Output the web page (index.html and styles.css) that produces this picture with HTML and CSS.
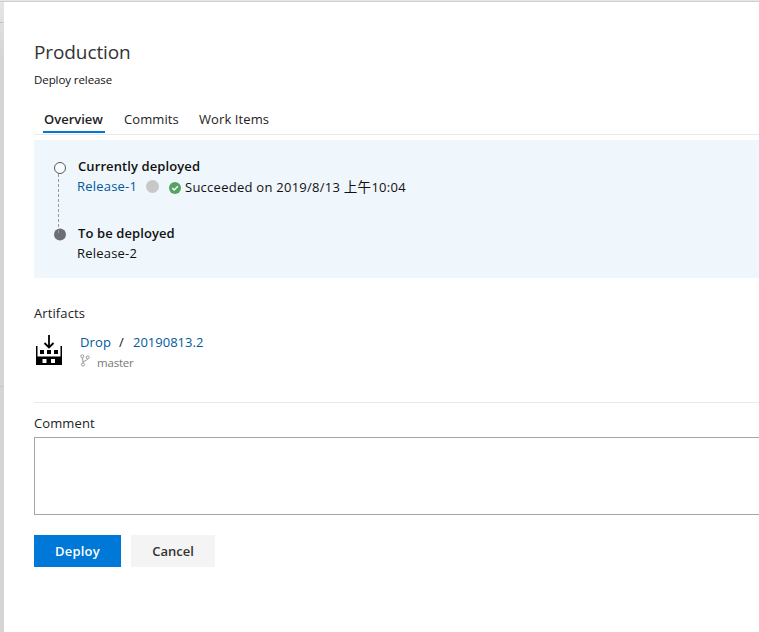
FILE: index.html
```html
<!DOCTYPE html>
<html lang="en">
<head>
<meta charset="utf-8">
<title>Deploy release</title>
<link rel="stylesheet" href="styles.css">
</head>
<body>
<div class="backdrop">
  <main class="panel">
    <h1 class="title">Production</h1>
    <p class="subtitle">Deploy release</p>
    <nav class="tabs">
      <a class="tab active">Overview</a>
      <a class="tab commits">Commits</a>
      <a class="tab work">Work Items</a>
    </nav>
    <section class="summary">
      <svg class="timeline" width="14" height="90" viewBox="0 0 14 90">
        <circle cx="7" cy="12" r="5.5" fill="#fff" fill-opacity=".6" stroke="#55585b"/>
        <path d="M5.5 18v55" stroke="#999" stroke-dasharray="3 2"/>
        <circle cx="7" cy="78.5" r="6" fill="#6b6f73"/>
        <path d="M5.5 74v3" stroke="#999"/>
      </svg>
      <div class="deployments">
        <strong class="heading current">Currently deployed</strong>
        <div class="status">
          <a class="link release">Release-1</a>
          <span class="dot"></span>
          <svg class="check" width="12" height="12" viewBox="0 0 12 12"><circle cx="6" cy="6" r="6" fill="#55a362"/><path d="M3.3 6.1l1.9 1.9 3.6-3.7" fill="none" stroke="#fff" stroke-width="1.4"/></svg>
          <span class="result">Succeeded on 2019/8/13 <span class="cjk">上午</span>10:04</span>
        </div>
        <strong class="heading next">To be deployed</strong>
        <span class="release second">Release-2</span>
      </div>
    </section>
    <h2 class="label artifacts">Artifacts</h2>
    <div class="artifact">
      <svg class="build" width="26" height="31" viewBox="0 0 26 31">
        <path d="M13 0v12M8.5 8l4.5 4.5L17.500 8" fill="none" stroke="#000" stroke-width="1.8"/>
        <path fill="#000" fill-rule="evenodd" d="M0 11h1.500v10.500h23V11H26v19H0zM6.500 24v4h4v-4zm8.500 0v4h4v-4z"/>
        <path fill="#000" d="M4 15h4v4H4zm7 0h4v4h-4zm7 0h4v4h-4z"/>
      </svg>
      <div class="source">
        <div class="path"><a class="link drop">Drop</a><span class="slash">/</span><a class="link number">20190813.2</a></div>
        <div class="branch">
          <svg width="10" height="13" viewBox="0 0 10 13" fill="none" stroke="#999"><circle cx="2.3" cy="2.3" r="1.5"/><circle cx="7.7" cy="3.3" r="1.5"/><circle cx="3" cy="10.5" r="1.5"/><path d="M2.5 4L3 9M7.5 5Q7 7 3 7.5"/></svg>
          <span>master</span>
        </div>
      </div>
    </div>
    <label class="label comment" for="comment">Comment</label>
    <textarea id="comment" class="input"></textarea>
    <div class="actions"><button class="button primary">Deploy</button><button class="button">Cancel</button></div>
  </main>
</div>
</body>
</html>
```

FILE: styles.css
```css
* { box-sizing: border-box; }
body { margin: 0; overflow: hidden; font: 13px/20px "Open Sans", "Noto Sans CJK TC", sans-serif; color: #111; }
.backdrop { height: 632px; padding: 2px 0 0 4px; background: linear-gradient(#cfcfcf, #cfcfcf) 0 1px / 100% 1px no-repeat, linear-gradient(#bebebe, #bebebe) 0 22px / 3px 1px no-repeat, linear-gradient(#c5c5c5, #c5c5c5) 0 386px / 3px 1px no-repeat, linear-gradient(#e6e6e6, #d4d4d4 60px); }
.panel { height: 630px; padding: 36px 0 0 30px; background: #fff; }
.title { margin: 0; font-size: 19px; line-height: 28px; font-weight: 400; color: #333; letter-spacing: -.1px; }
.subtitle { margin: 4px 0 0; font-size: 11.5px; line-height: 20px; letter-spacing: -.08px; }
.tabs { display: flex; height: 31px; margin-top: 14px; padding-left: 9px; border-bottom: 1px solid #eaeaea; line-height: 22px; }
.tab { height: 29px; padding-top: 4px; }
.active { width: 62px; padding-left: 1px; border-bottom: 2px solid #0078d4; font-weight: 600; }
.commits { width: 75px; padding-left: 19px; letter-spacing: .1px; }
.work { padding-left: 19px; letter-spacing: .1px; }
.tab, .label { color: #222; }
.summary { display: flex; height: 138px; margin-top: 5px; padding: 16px 0 0 19px; background: #eff6fc; }
.deployments { margin-left: 10px; display: flex; flex-direction: column; }
.heading { margin-left: 1px; font-weight: 600; letter-spacing: .1px; }
.status { display: flex; height: 20px; }
.release { width: 69px; letter-spacing: .2px; }
.dot { width: 13px; height: 13px; margin-top: 4px; border-radius: 50%; background: #c8c8c8; }
.check { margin: 6px 4px 0 10px; }
.result { height: 20px; margin-top: 1px; white-space: pre; letter-spacing: .26px; }
.cjk { font-size: 13.5px; line-height: 1; }
.next { margin-top: 27px; }
.link { color: #005a9e; }
.label { display: block; margin: 0; font-size: 13px; font-weight: 400; letter-spacing: .1px; }
.artifacts { margin-top: 25px; }
.artifact { display: flex; height: 80px; padding: 12px 0 0 2px; border-bottom: 1px solid #eaeaea; }
.source { margin-left: 18px; margin-top: -3px; }
.path { display: flex; }
.drop { width: 39px; letter-spacing: .15px; }
.slash { width: 14px; }
.branch { display: flex; gap: 7px; margin-top: 2px; font-size: 11.5px; line-height: 18px; color: #777; letter-spacing: -.2px; }
.comment { margin-top: 10px; }
.input { display: block; width: calc(100% + 2px); height: 78px; margin-top: 4px; border: 1px solid #a6a6a6; border-radius: 0; background: #fff; resize: none; }
.actions { display: flex; gap: 10px; margin-top: 20px; }
.button { width: 84px; height: 32px; padding: 0; border: 0; background: #f4f4f4; color: #333; font: 600 13px/20px "Open Sans", sans-serif; }
.primary { width: 87px; background: #0078d7; color: #fff; letter-spacing: .2px; }
```
